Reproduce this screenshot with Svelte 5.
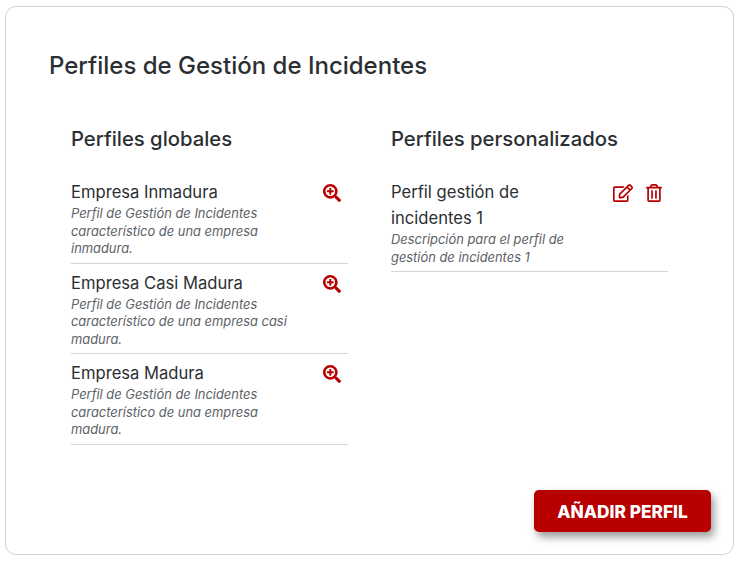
<script>
	const globales = [
		{ name: 'Empresa Inmadura', desc: 'Perfil de Gestión de Incidentes característico de una empresa inmadura.' },
		{ name: 'Empresa Casi Madura', desc: 'Perfil de Gestión de Incidentes característico de una empresa casi madura.' },
		{ name: 'Empresa Madura', desc: 'Perfil de Gestión de Incidentes característico de una empresa madura.' }
	]
	const personalizados = [
		{ name: 'Perfil gestión de incidentes 1', desc: 'Descripción para el perfil de gestión de incidentes 1' }
	]
</script>

<div class="card">
	<h1>Perfiles de Gestión de Incidentes</h1>
	<div class="columns">
		<section>
			<h2>Perfiles globales</h2>
			<ul>
				{#each globales as perfil}
					<li>
						<div class="text">
							<div class="name">{perfil.name}</div>
							<div class="desc">{perfil.desc}</div>
						</div>
						<div class="actions">
							<svg class="zoom" viewBox="0 0 512 512" aria-label="Ver"><path d="M304 192v32c0 6.6-5.4 12-12 12h-56v56c0 6.6-5.4 12-12 12h-32c-6.6 0-12-5.4-12-12v-56h-56c-6.6 0-12-5.4-12-12v-32c0-6.6 5.4-12 12-12h56v-56c0-6.6 5.4-12 12-12h32c6.6 0 12 5.4 12 12v56h56c6.6 0 12 5.4 12 12zm201 284.7L476.7 505c-9.4 9.4-24.6 9.4-33.9 0L343 405.3c-4.5-4.5-7-10.6-7-17V372c-35.3 27.6-79.7 44-128 44C93.1 416 0 322.9 0 208S93.1 0 208 0s208 93.1 208 208c0 48.3-16.4 92.7-44 128h16.3c6.4 0 12.5 2.5 17 7l99.7 99.7c9.3 9.4 9.3 24.6 0 34zM344 208c0-75.2-60.8-136-136-136S72 132.8 72 208s60.8 136 136 136 136-60.8 136-136z"/></svg>
						</div>
					</li>
				{/each}
			</ul>
		</section>
		<section>
			<h2>Perfiles personalizados</h2>
			<ul>
				{#each personalizados as perfil}
					<li class="own">
						<div class="text">
							<div class="name">{perfil.name}</div>
							<div class="desc">{perfil.desc}</div>
						</div>
						<div class="actions">
							<svg class="edit" viewBox="0 0 576 512" aria-label="Editar"><path d="M402.3 344.9l32-32c5-5 13.7-1.5 13.7 5.7V464c0 26.5-21.5 48-48 48H48c-26.5 0-48-21.5-48-48V112c0-26.5 21.5-48 48-48h273.5c7.1 0 10.7 8.6 5.7 13.7l-32 32c-1.5 1.5-3.5 2.3-5.7 2.3H48v352h352V350.5c0-2.1.8-4.1 2.3-5.6zm156.6-201.8L296.3 405.7l-90.4 10c-26.2 2.9-48.5-19.2-45.6-45.6l10-90.4L432.9 17.1c22.9-22.9 59.9-22.9 82.7 0l43.2 43.2c22.9 22.9 22.9 60 .1 82.8zM460.1 174L402 115.9 216.2 301.8l-7.3 65.3 65.3-7.3L460.1 174zm64.8-79.7l-43.2-43.2c-4.1-4.1-10.8-4.1-14.8 0L436 82l58.1 58.1 30.9-30.9c4-4.2 4-10.8-.1-14.9z"/></svg>
							<svg class="trash" viewBox="0 0 448 512" aria-label="Borrar"><path d="M268 416h24a12 12 0 0 0 12-12V188a12 12 0 0 0-12-12h-24a12 12 0 0 0-12 12v216a12 12 0 0 0 12 12zM432 80h-82.41l-34-56.7A48 48 0 0 0 274.41 0H173.59a48 48 0 0 0-41.16 23.3L98.41 80H16A16 16 0 0 0 0 96v16a16 16 0 0 0 16 16h16v336a48 48 0 0 0 48 48h288a48 48 0 0 0 48-48V128h16a16 16 0 0 0 16-16V96a16 16 0 0 0-16-16zM171.84 50.91A6 6 0 0 1 177 48h94a6 6 0 0 1 5.15 2.91L293.61 80H154.39zM368 464H80V128h288zm-212-48h24a12 12 0 0 0 12-12V188a12 12 0 0 0-12-12h-24a12 12 0 0 0-12 12v216a12 12 0 0 0 12 12z"/></svg>
						</div>
					</li>
				{/each}
			</ul>
		</section>
	</div>
	<div class="footer">
		<button>AÑADIR PERFIL</button>
	</div>
</div>

<style>
	:global(body) {
		margin: 0;
		background: #fff;
	}
	.card {
		box-sizing: border-box;
		width: 729px;
		height: 549px;
		margin: 6px 0 0 5px;
		padding: 44px 22px 22px 43px;
		border: 1px solid #d2d2d2;
		border-radius: 11px;
		display: flex;
		flex-direction: column;
		font-family: Inter, 'Noto Sans', sans-serif;
		color: #2b2f33;
	}
	h1 {
		margin: 0;
		font-size: 24px;
		line-height: 30px;
		font-weight: 500;
	}
	.columns {
		display: flex;
		gap: 43px;
		margin-top: 44px;
		padding-left: 22px;
	}
	section {
		width: 277px;
	}
	h2 {
		margin: 0;
		font-size: 20.25px;
		line-height: 28px;
		font-weight: 500;
	}
	ul {
		list-style: none;
		margin: 20px 0 0;
		padding: 0;
	}
	li {
		display: flex;
		justify-content: space-between;
		border-bottom: 1px solid #d4d4d4;
		padding: 6px 0 5px;
	}
	.text {
		width: 232px;
	}
	.own .text {
		width: 190px;
	}
	.name {
		font-size: 16.6px;
		line-height: 26px;
	}
	.desc {
		font-size: 12.9px;
		line-height: 17.5px;
		font-style: italic;
		color: #5c6166;
	}
	.actions {
		display: flex;
		gap: 13px;
		padding: 5px 7px 0 0;
		color: #b80000;
	}
	.own .actions {
		padding-right: 6px;
	}
	svg {
		height: 18px;
		fill: currentColor;
		display: block;
	}
	.zoom {
		width: 18px;
	}
	.edit {
		width: 20px;
	}
	.trash {
		width: 16px;
	}
	.footer {
		margin-top: auto;
		display: flex;
		justify-content: flex-end;
	}
	button {
		width: 177px;
		height: 42px;
		border: none;
		border-radius: 5px;
		background: #b80000;
		color: #fff;
		font-family: inherit;
		font-size: 17.3px;
		font-weight: 800;
		box-shadow: 3px 5px 8px rgba(0, 0, 0, 0.4);
	}
</style>
